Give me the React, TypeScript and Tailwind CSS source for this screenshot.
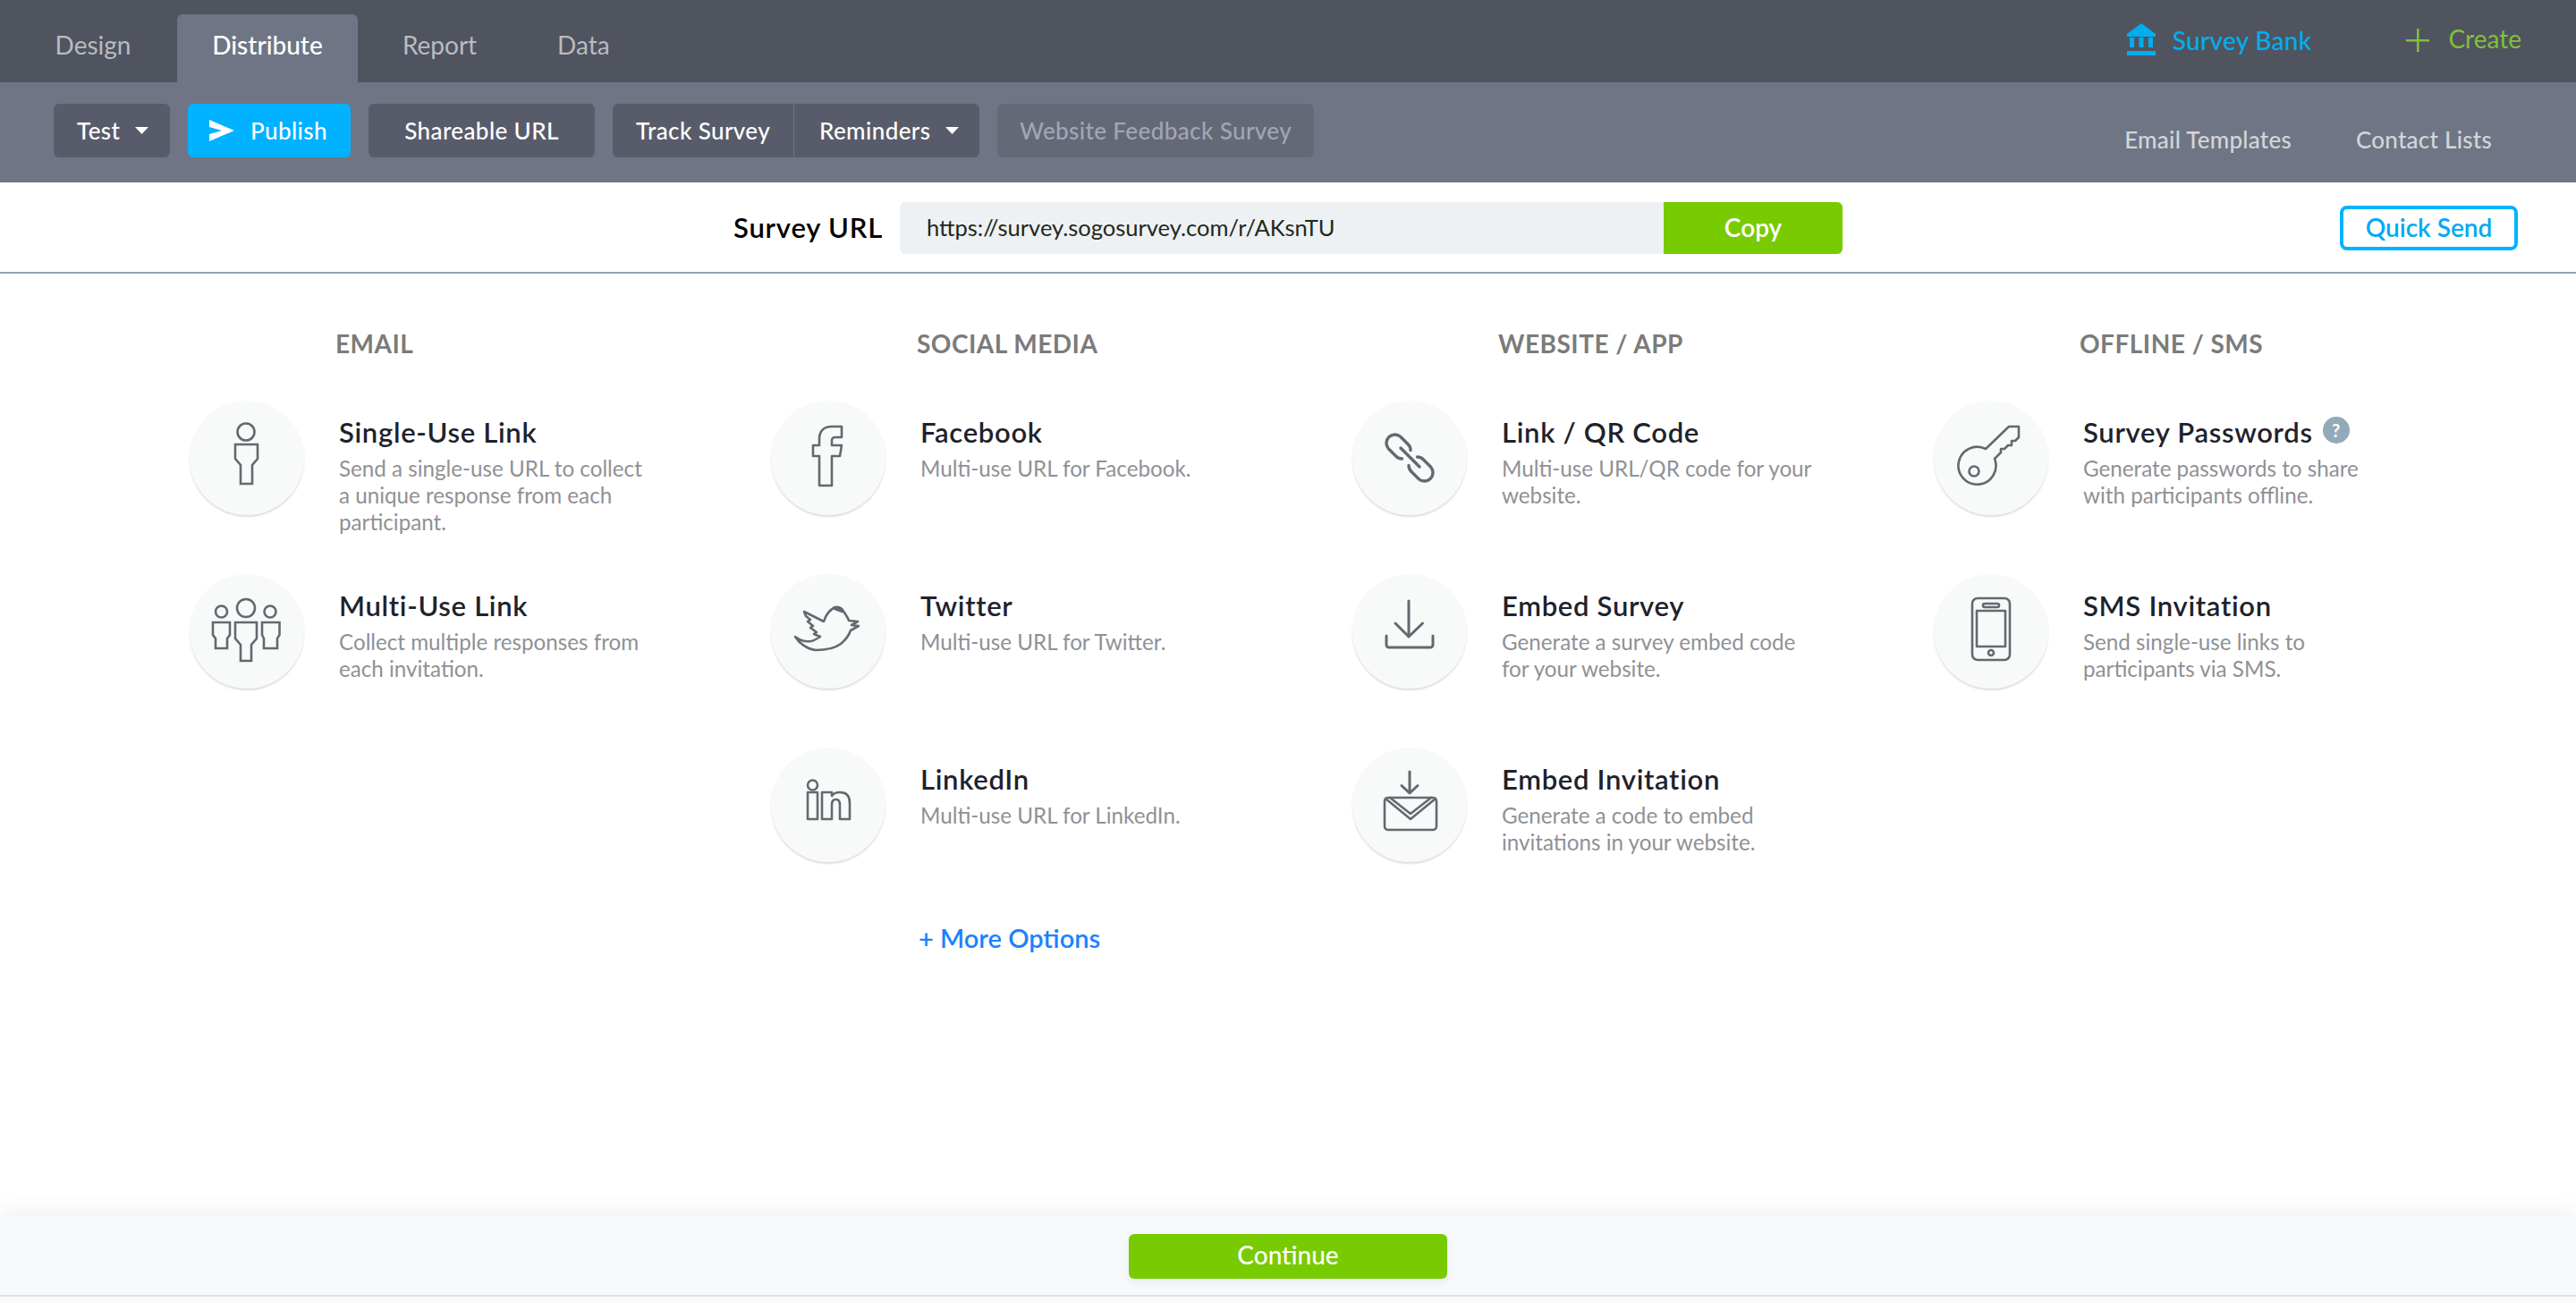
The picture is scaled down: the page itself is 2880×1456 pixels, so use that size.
import type { ReactNode } from 'react';

const font = "font-['Lato','Open_Sans',sans-serif]";

function Ico({ children }: { children: ReactNode }) {
  return (
    <svg viewBox="0 0 128 128" className="h-full w-full" fill="none" stroke="#65686f" strokeWidth="2.6" strokeLinejoin="round" strokeLinecap="round">
      {children}
    </svg>
  );
}

const icons: Record<string, ReactNode> = {
  single: (
    <Ico>
      <circle cx="63" cy="35" r="9.5" />
      <path d="M51 49H76V65L70 72V93H57V72L51 65Z" strokeLinejoin="miter" />
    </Ico>
  ),
  multi: (
    <Ico>
      <circle cx="63" cy="38" r="10" />
      <path d="M51 54H75V72L69 79V97H57V79L51 72Z" strokeLinejoin="miter" />
      <circle cx="35.5" cy="42" r="6.5" />
      <path d="M26 54H45V68L42 72V83H29V72L26 68Z" strokeLinejoin="miter" />
      <circle cx="90" cy="42" r="6.5" />
      <path d="M81 54H100.5V68L98 72V83H83V72L81 68Z" strokeLinejoin="miter" />
    </Ico>
  ),
  facebook: (
    <Ico>
      <path d="M54 95V62H47V50H54V43C54 34 59 29 68 29H79V41H72C69 41 68 42 68 45V50H79L77 62H68V95Z" />
    </Ico>
  ),
  twitter: (
    <Ico>
      <path d="M37 42L59 53C61 46 66 39 72 37C77 36 80 39 82 43C84 46 86 49 87 52L97 53L90 57L98 58L89 63C87 69 84 73 78 78C70 84 60 85 50 85C41 84 32 78 27 70C32 74 38 76 45 75C49 74 52 72 55 70L48 67L51 65L44 60L47 58L41 53L44 51L39 47Z" />
      <path d="M70 38C74 36 79 38 80 42C76 40 72 40 70 38Z" fill="#65686f" />
    </Ico>
  ),
  linkedin: (
    <Ico>
      <circle cx="46.5" cy="42" r="5.5" />
      <rect x="41" y="50" width="11" height="30" />
      <path d="M57 50H68V54C70 51 73 50 77 50C84 50 88 54 88 62V80H77V64C77 60 75 58 72.5 58C70 58 68 60 68 64V80H57Z" />
    </Ico>
  ),
  link: (
    <Ico>
      <g strokeWidth="3.4">
        <path d="M55.5 65A9.5 9.5 0 0 1 48.8 62.2L40.3 53.7A9.5 9.5 0 0 1 53.7 40.3L62.2 48.8A9.5 9.5 0 0 1 65 55.5" />
        <path d="M72.5 63A9.5 9.5 0 0 1 79.2 65.8L87.7 74.3A9.5 9.5 0 0 1 74.3 87.7L65.8 79.2A9.5 9.5 0 0 1 63 72.5" />
        <path d="M54 53L75 74" />
      </g>
    </Ico>
  ),
  download: (
    <Ico>
      <g strokeWidth="3">
        <path d="M63 30V70M48 55L63 70L78.5 55" />
        <path d="M38 69V79A3 3 0 0 0 41 82H87A3 3 0 0 0 90 79V69" />
      </g>
    </Ico>
  ),
  invite: (
    <Ico>
      <g strokeWidth="3">
        <path d="M64 27V50M55 42.5L64 51L73 42.5" />
      </g>
      <rect x="36" y="56" width="58" height="36" rx="4" />
      <path d="M37 57L65 80L93 57M42 56L65 74L88 56" />
    </Ico>
  ),
  key: (
    <Ico>
      <path d="M58 54L84 29H95V41L91 45H87V50H83L79 54H75V58L68 65A21 21 0 1 1 58 54Z" />
      <circle cx="45" cy="79" r="5.5" />
    </Ico>
  ),
  phone: (
    <Ico>
      <rect x="43" y="27" width="42" height="69" rx="6" />
      <rect x="55" y="33" width="18" height="4" rx="2" />
      <rect x="48" y="41" width="32" height="40" />
      <circle cx="64" cy="88" r="3" />
    </Ico>
  ),
};

type Opt = { icon: string; title: string; desc: string[]; help?: boolean };
type Col = { head: string; opts: Opt[]; more?: boolean };

const cols: Col[] = [
  {
    head: 'EMAIL',
    opts: [
      { icon: 'single', title: 'Single-Use Link', desc: ['Send a single-use URL to collect', 'a unique response from each', 'participant.'] },
      { icon: 'multi', title: 'Multi-Use Link', desc: ['Collect multiple responses from', 'each invitation.'] },
    ],
  },
  {
    head: 'SOCIAL MEDIA',
    more: true,
    opts: [
      { icon: 'facebook', title: 'Facebook', desc: ['Multi-use URL for Facebook.'] },
      { icon: 'twitter', title: 'Twitter', desc: ['Multi-use URL for Twitter.'] },
      { icon: 'linkedin', title: 'LinkedIn', desc: ['Multi-use URL for LinkedIn.'] },
    ],
  },
  {
    head: 'WEBSITE / APP',
    opts: [
      { icon: 'link', title: 'Link / QR Code', desc: ['Multi-use URL/QR code for your', 'website.'] },
      { icon: 'download', title: 'Embed Survey', desc: ['Generate a survey embed code', 'for your website.'] },
      { icon: 'invite', title: 'Embed Invitation', desc: ['Generate a code to embed', 'invitations in your website.'] },
    ],
  },
  {
    head: 'OFFLINE / SMS',
    opts: [
      { icon: 'key', title: 'Survey Passwords', desc: ['Generate passwords to share', 'with participants offline.'], help: true },
      { icon: 'phone', title: 'SMS Invitation', desc: ['Send single-use links to', 'participants via SMS.'] },
    ],
  },
];

function Caret({ color = '#ffffff' }: { color?: string }) {
  return (
    <svg width="15" height="8" viewBox="0 0 15 8" className="ml-[17px]">
      <path d="M0 0H15L7.5 8Z" fill={color} />
    </svg>
  );
}

function Option({ opt }: { opt: Opt }) {
  return (
    <div className="flex h-[194px]">
      <div className="h-[128px] w-[128px] shrink-0 rounded-full bg-[#f8f9f9] shadow-[0_2px_2px_rgba(0,0,0,0.13)]">
        {icons[opt.icon]}
      </div>
      <div className="ml-[39px] pt-[18px]">
        <div className="flex h-[34px] items-center text-[31px] font-semibold leading-[34px] tracking-[0.7px] text-[#1e222c]">
          {opt.title}
          {opt.help && (
            <span className="mb-[4px] ml-[11px] flex h-[30px] w-[30px] items-center justify-center rounded-full bg-[#93aab9] text-[20px] font-bold tracking-normal text-white">?</span>
          )}
        </div>
        <div className="mt-[9px] text-[24.2px] leading-[30px] text-[#8f9195]">
          {opt.desc.map((d) => (
            <div key={d}>{d}</div>
          ))}
        </div>
      </div>
    </div>
  );
}

export default function App() {
  return (
    <div className={`flex h-[1456px] w-[2880px] flex-col overflow-hidden bg-white ${font}`}>
      {/* TOP TABS */}
      <div className="flex h-[92px] shrink-0 items-stretch justify-between bg-[#50545e]">
        <div className="flex items-end gap-[10px] pl-[20px]">
          <div className="flex h-[76px] w-[168px] items-center justify-center pb-[8px] text-[28px] text-[#b9bbc1]">Design</div>
          <div className="flex h-[76px] w-[202px] items-center justify-center rounded-t-[6px] bg-[#707585] pb-[8px] text-[28px] font-medium text-white">Distribute</div>
          <div className="flex h-[76px] w-[163px] items-center justify-center pb-[8px] text-[28px] text-[#b9bbc1]">Report</div>
          <div className="flex h-[76px] items-center px-[40px] pb-[8px] text-[28px] text-[#b9bbc1]">Data</div>
        </div>
        <div className="flex items-start pr-[61px] pt-[26px]">
          <svg width="32" height="36" viewBox="0 0 32 36" fill="#00aeef">
            <path d="M16 0L32 12V15H0V12Z" />
            <path d="M3 16H8V27H3ZM13.5 16H18.5V27H13.5ZM24 16H29V27H24Z" />
            <path d="M0 31H32V36H0Z" />
          </svg>
          <span className="ml-[19px] text-[28px] font-medium leading-[38px] tracking-[0.3px] text-[#00aeef]">Survey Bank</span>
          <svg width="26" height="26" viewBox="0 0 26 26" className="ml-[106px] mt-[6px]" fill="#7fc13a">
            <path d="M12 0H14.5V12H26V14.5H14.5V26H12V14.5H0V12H12Z" />
          </svg>
          <span className="ml-[21px] text-[28px] leading-[34px] text-[#7fc13a]">Create</span>
        </div>
      </div>

      {/* SUB BAR */}
      <div className="flex h-[112px] shrink-0 justify-between bg-[#707585]">
        <div className="flex items-start gap-[20px] pl-[60px] pt-[24px] text-[26px] font-medium tracking-[0.4px] text-white">
          <div className="flex h-[60px] w-[130px] items-center rounded-[6px] bg-[#585c6a] pl-[26px]">
            Test
            <Caret />
          </div>
          <div className="flex h-[60px] w-[182px] items-center rounded-[6px] bg-[#00b2ff] pl-[24px]">
            <svg width="28" height="24" viewBox="0 0 28 24" fill="#ffffff">
              <path d="M0 0L28 12L0 24V16L14 12L0 8Z" />
            </svg>
            <span className="ml-[18px]">Publish</span>
          </div>
          <div className="flex h-[60px] w-[253px] items-center justify-center rounded-[6px] bg-[#585c6a]">Shareable URL</div>
          <div className="flex h-[60px] w-[410px] items-center rounded-[6px] bg-[#585c6a]">
            <div className="flex h-full w-[203px] items-center justify-center border-r border-[#707585]">Track Survey</div>
            <div className="flex items-center pl-[28px]">
              Reminders
              <Caret />
            </div>
          </div>
          <div className="flex h-[60px] w-[354px] items-center justify-center rounded-[6px] bg-[#646978] text-[#a3a6b1]">Website Feedback Survey</div>
        </div>
        <div className="flex gap-[72px] pr-[94px] pt-[46px] text-[26px] font-medium leading-[36px] tracking-[0.25px] text-[#d3d5da]">
          <span>Email Templates</span>
          <span>Contact Lists</span>
        </div>
      </div>

      {/* SURVEY URL */}
      <div className="flex h-[102px] shrink-0 items-center border-b-2 border-[#8ea4ae] pl-[820px] pt-[2px]">
        <span className="w-[186px] pb-[2px] text-[31px] font-semibold tracking-[0.8px] text-black">Survey URL</span>
        <div className="flex h-[58px] w-[1054px] items-center overflow-hidden rounded-[6px] bg-[#eef1f4]">
          <span className="flex-1 pb-[2px] pl-[30px] text-[25.5px] text-[#22281c]">https://survey.sogosurvey.com/r/AKsnTU</span>
          <span className="flex h-full w-[200px] items-center justify-center bg-[#78cb00] pb-[2px] text-[28px] font-semibold text-white">Copy</span>
        </div>
        <div className="ml-[556px] flex h-[50px] w-[199px] items-center justify-center rounded-[8px] border-[4px] border-[#00b2ff] pb-[2px] text-[28px] font-semibold text-[#00a9f4]">
          Quick Send
        </div>
      </div>

      {/* OPTIONS */}
      <div className="grid flex-1 grid-cols-[650px_650px_650px_650px] pl-[212px] pt-[60px]">
        {cols.map((c) => (
          <div key={c.head}>
            <div className="mb-[46px] ml-[163px] h-[36px] text-[28px] font-bold leading-[36px] tracking-[0.5px] text-[#7b7b7b]">{c.head}</div>
            {c.opts.map((o) => (
              <Option key={o.title} opt={o} />
            ))}
            {c.more && <div className="ml-[165px] mt-[-3px] text-[29px] font-semibold text-[#1a82ff]">+ More Options</div>}
          </div>
        ))}
      </div>

      {/* FOOTER */}
      <div className="h-[96px] shrink-0 bg-[#f8f9fb] shadow-[0_-8px_20px_rgba(0,0,0,0.05)]">
        <div className="flex h-[90px] items-start justify-center border-b-2 border-[#dfe2e3] pt-[20px]">
          <div className="flex h-[50px] w-[356px] items-center justify-center rounded-[6px] bg-[#78cb00] pb-[4px] text-[28px] font-medium text-white shadow-[0_4px_10px_rgba(0,0,0,0.06)]">
            Continue
          </div>
        </div>
      </div>
    </div>
  );
}
